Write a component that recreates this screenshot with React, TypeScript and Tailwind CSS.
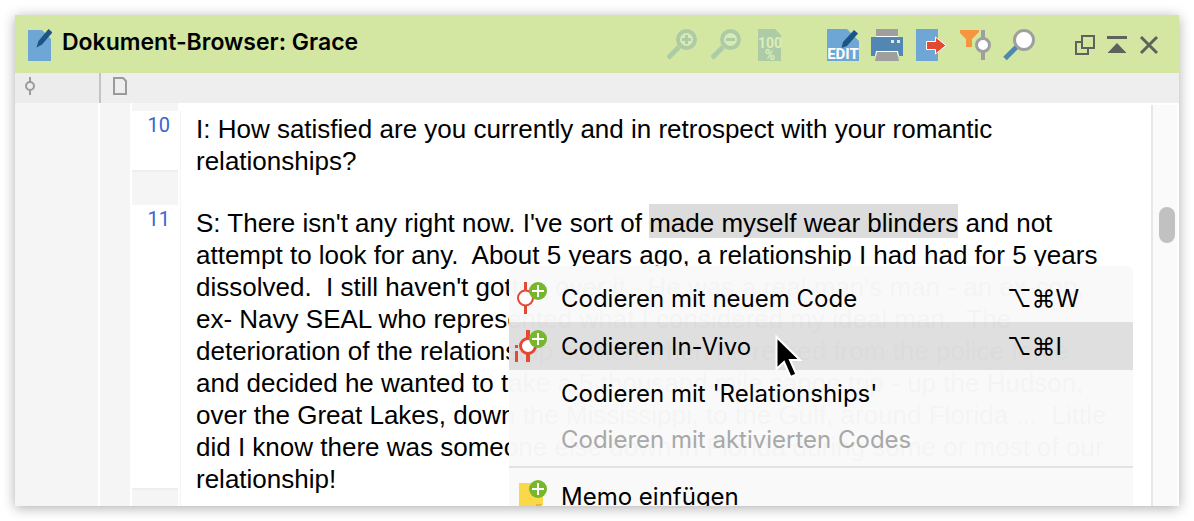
import type { ReactNode } from 'react'

type Paragraph = {
  number: number
  content: ReactNode
}

type MenuItem = {
  label: string
  shortcut?: string
  icon?: ReactNode
  active?: boolean
  disabled?: boolean
}

/* Toolbar icons, all drawn on a 32px grid */

function DocumentIcon() {
  return (
    <svg width="24" height="32" viewBox="0 0 24 32" aria-hidden="true">
      <path d="M0 1H14L23 10V32H0Z" fill="#6ea6d5" />
      <path d="M8.500 18.500L10.500 12L20.500 0L24.500 3.500L14 15.500Z" fill="#1b5585" />
    </svg>
  )
}

function ZoomIcon({ plus }: { plus?: boolean }) {
  return (
    <svg width="32" height="32" viewBox="0 0 32 32" aria-hidden="true">
      <path d="M1 29L12 18" stroke="#adcca6" strokeWidth="5" />
      <circle cx="19.500" cy="10.500" r="8.500" fill="#d9eab5" stroke="#adcca6" strokeWidth="4" />
      <path d={plus ? 'M15 10.5H24M19.5 6V15' : 'M15 10.5H24'} stroke="#adcca6" strokeWidth="3" />
    </svg>
  )
}

function HundredPercentIcon() {
  return (
    <svg width="32" height="32" viewBox="0 0 32 32" aria-hidden="true">
      <path d="M3 0H20L26 6V32H3Z" fill="#adcca6" />
      <g
        fill="#dcedb6"
        fontFamily="'Liberation Sans Narrow', Roboto, sans-serif"
        fontWeight="700"
        textAnchor="middle"
      >
        <text x="15" y="19" fontSize="14">100</text>
        <text x="15" y="31" fontSize="14">%</text>
      </g>
    </svg>
  )
}

function EditIcon() {
  return (
    <svg width="32" height="32" viewBox="0 0 32 32" aria-hidden="true">
      <path d="M0 0H20L32 12V32H0Z" fill="#6ea6d5" />
      <path d="M14.500 19L16 13L27 1L31 4.500L20 17Z" fill="#1b5585" />
      <text
        x="16"
        y="30"
        fill="#fff"
        fontFamily="'Liberation Sans Narrow', Roboto, sans-serif"
        fontSize="15"
        fontWeight="700"
        textAnchor="middle"
      >
        EDIT
      </text>
    </svg>
  )
}

function PrinterIcon() {
  return (
    <svg width="32" height="32" viewBox="0 0 32 32" aria-hidden="true">
      <path d="M5 0H27V7H5Z" fill="#9f9f9f" />
      <path d="M0 8H32V27H0Z" fill="#5187b2" />
      <path d="M5 7H27V8H5Z" fill="#fff" />
      <path d="M20 11H23V14H20ZM26 11H29V14H26Z" fill="#e8e8e8" />
      <path d="M5 22H27L28 27H4Z" fill="#fff" />
      <path d="M6 23H26L28 32H4Z" fill="#9f9f9f" />
    </svg>
  )
}

function ExportIcon() {
  return (
    <svg width="32" height="32" viewBox="0 0 32 32" aria-hidden="true">
      <path d="M1 0H23V32H1Z" fill="#6ea6d5" />
      <path
        d="M11.500 12.500H20.500V8L31 16.500L20.500 25V20.500H11.500Z"
        fill="#e24a33"
        stroke="#fff"
        strokeWidth="1"
      />
    </svg>
  )
}

function FilterCodeIcon() {
  return (
    <svg width="32" height="32" viewBox="0 0 32 32" aria-hidden="true">
      <path d="M1 1H20V3L13 10V18H7V10L1 4Z" fill="#f7953f" />
      <path d="M24 1V31" stroke="#9f9f9f" strokeWidth="4" />
      <circle cx="24" cy="16" r="6.500" fill="#fff" stroke="#9f9f9f" strokeWidth="3" />
    </svg>
  )
}

function SearchIcon() {
  return (
    <svg width="32" height="32" viewBox="0 0 32 32" aria-hidden="true">
      <path d="M2 29.500L14 17.500" stroke="#4f87b3" strokeWidth="5" />
      <circle cx="21" cy="11" r="9.500" fill="#fff" stroke="#9f9f9f" strokeWidth="3" />
    </svg>
  )
}

/* Window controls */

function UndockIcon() {
  return (
    <svg width="20" height="20" viewBox="0 0 20 20" aria-hidden="true">
      <path d="M7 7H1V19H13V13" fill="none" stroke="#5f625c" strokeWidth="2" />
      <path d="M7 1H19V13H7Z" fill="none" stroke="#5f625c" strokeWidth="2" />
    </svg>
  )
}

function CollapseIcon() {
  return (
    <svg width="20" height="20" viewBox="0 0 20 20" aria-hidden="true">
      <path d="M0 1H20V4H0ZM10 8L19.500 18H0.500Z" fill="#5f625c" />
    </svg>
  )
}

function CloseIcon() {
  return (
    <svg width="20" height="20" viewBox="0 0 20 20" aria-hidden="true">
      <path d="M2 2L18 18M18 2L2 18" stroke="#5f625c" strokeWidth="3" />
    </svg>
  )
}

/* Context menu icons */

function PlusBadge() {
  return (
    <>
      <circle cx="29" cy="10" r="9" fill="#76b72e" />
      <path d="M23 10H35M29 4V16" stroke="#fff" strokeWidth="2" />
    </>
  )
}

function NewCodeIcon() {
  return (
    <svg width="38" height="34" viewBox="0 0 38 34" aria-hidden="true">
      <path d="M16.500 1V33" stroke="#e24a33" strokeWidth="3" />
      <circle cx="16.500" cy="17" r="7.500" fill="#fff" stroke="#e24a33" strokeWidth="2" />
      <PlusBadge />
    </svg>
  )
}

function InVivoIcon() {
  return (
    <svg width="38" height="34" viewBox="0 0 38 34" aria-hidden="true">
      <path d="M19 1V33" stroke="#e24a33" strokeWidth="4" />
      <circle cx="19" cy="17" r="7.500" fill="#fff" stroke="#e24a33" strokeWidth="3" />
      <path d="M6 16H9V19H6ZM6 22H9V33H6Z" fill="#e24a33" />
      <PlusBadge />
    </svg>
  )
}

function MemoIcon() {
  return (
    <svg width="38" height="34" viewBox="0 0 38 34" aria-hidden="true">
      <path d="M10 4H34V25L27 32H10Z" fill="#f9d84a" />
      <path d="M34 25H27V32Z" fill="#e5b93a" />
      <PlusBadge />
    </svg>
  )
}

const zoomTools = [
  { label: 'Vergrößern', icon: <ZoomIcon plus /> },
  { label: 'Verkleinern', icon: <ZoomIcon /> },
  { label: 'Originalgröße', icon: <HundredPercentIcon /> },
]

const documentTools = [
  { label: 'Bearbeiten', icon: <EditIcon /> },
  { label: 'Drucken', icon: <PrinterIcon /> },
  { label: 'Exportieren', icon: <ExportIcon /> },
  { label: 'Codes filtern', icon: <FilterCodeIcon /> },
  { label: 'Suchen', icon: <SearchIcon /> },
]

const windowTools = [
  { label: 'Abdocken', icon: <UndockIcon /> },
  { label: 'Einklappen', icon: <CollapseIcon /> },
  { label: 'Schließen', icon: <CloseIcon /> },
]

const paragraphs: Paragraph[] = [
  {
    number: 10,
    content:
      'I: How satisfied are you currently and in retrospect with your romantic relationships?',
  },
  {
    number: 11,
    content: (
      <>
        S: There isn't any right now. I've sort of{' '}
        <mark className="bg-[#dcdcdc] pt-1 text-black">made myself wear blinders</mark>
        {' and not attempt to look for any.  About 5 years ago, a relationship I had had for 5 years dissolved.  '}
        {"I still haven't gotten over it.  He was a real man's man - an ex-cop, ex- Navy SEAL who represented "}
        {'what I considered my ideal man.  The deterioration of the relationship started when he retired from '}
        {'the police force and decided he wanted to take a 5 thousand mile canoe trip - up the Hudson, over the '}
        {'Great Lakes, down the Mississippi, to the Gulf, around Florida ...  Little did I know there was '}
        {'someone else down in Florida during some or most of our relationship!'}
      </>
    ),
  },
]

const codingItems: MenuItem[] = [
  { label: 'Codieren mit neuem Code', shortcut: '⌥⌘W', icon: <NewCodeIcon /> },
  { label: 'Codieren In-Vivo', shortcut: '⌥⌘I', icon: <InVivoIcon />, active: true },
  { label: "Codieren mit 'Relationships'" },
  { label: 'Codieren mit aktivierten Codes', disabled: true },
]

const memoItems: MenuItem[] = [{ label: 'Memo einfügen', icon: <MemoIcon /> }]

function ToolGroup({ tools }: { tools: { label: string; icon: ReactNode }[] }) {
  return (
    <div className="flex items-center gap-3">
      {tools.map((tool) => (
        <button key={tool.label} type="button" aria-label={tool.label}>
          {tool.icon}
        </button>
      ))}
    </div>
  )
}

function MenuRow({ item }: { item: MenuItem }) {
  return (
    <button
      type="button"
      role="menuitem"
      disabled={item.disabled}
      className={`flex w-full items-center text-left ${item.icon ? 'h-12' : 'h-[46px]'} ${
        item.active ? 'bg-black/10' : ''
      } ${item.disabled ? 'text-[#a8a8a8]' : 'text-black'}`}
    >
      <span className="w-[52px] shrink-0">{item.icon}</span>
      <span className="flex-1 pt-0.5">{item.label}</span>
      {item.shortcut && <span className="w-[126px] shrink-0 pt-0.5">{item.shortcut}</span>}
    </button>
  )
}

function ContextMenu() {
  return (
    <div
      role="menu"
      className="absolute top-[163px] left-[494px] w-[624px] rounded-md bg-[#f9f9f9]/98 pt-2 font-[Inter,'DejaVu_Sans',sans-serif] text-2xl"
    >
      {codingItems.map((item) => (
        <MenuRow key={item.label} item={item} />
      ))}
      <hr className="my-1 border-t-2 border-[#e2e2e2]" />
      {memoItems.map((item) => (
        <MenuRow key={item.label} item={item} />
      ))}
    </div>
  )
}

function MouseCursor() {
  return (
    <svg
      className="absolute top-[231px] left-[760px]"
      width="28"
      height="46"
      viewBox="0 0 28 46"
      aria-hidden="true"
    >
      <path
        d="M1.500 3V35L9 28L15.500 43L21.500 40.500L15 26H25Z"
        fill="#000"
        stroke="#fff"
        strokeWidth="2"
      />
    </svg>
  )
}

export default function App() {
  return (
    <div className="h-screen bg-white p-[15px]">
      <main className="flex h-full flex-col overflow-hidden bg-white shadow-[0_2px_12px_rgba(0,0,0,0.32)]">
        <header className="flex h-[58px] shrink-0 items-center gap-10 bg-[#d3e7a2] pt-0.5 pr-5 pl-[13px]">
          <div className="flex flex-1 items-center gap-2.5">
            <DocumentIcon />
            <h1 className="pb-1.5 font-[Inter,sans-serif] text-[23px] font-semibold text-black">
              Dokument-Browser: Grace
            </h1>
          </div>
          <ToolGroup tools={zoomTools} />
          <ToolGroup tools={documentTools} />
          <ToolGroup tools={windowTools} />
        </header>

        {/* Column headers */}
        <div className="flex h-[30px] shrink-0 bg-[#eeeeee]">
          <div className="w-[86px] border-r-2 border-[#c4c4c4] bg-[#ececec] pt-1 pl-[9px]">
            <svg width="12" height="18" viewBox="0 0 12 18" aria-hidden="true">
              <path d="M6 0V5M6 13V18" stroke="#9b9b9b" strokeWidth="2" />
              <circle cx="6" cy="9" r="4" fill="none" stroke="#9b9b9b" strokeWidth="2" />
            </svg>
          </div>
          <div className="pt-1 pl-3">
            <svg width="14" height="18" viewBox="0 0 14 18" aria-hidden="true">
              <path d="M1 1H10L13 4V17H1Z" fill="none" stroke="#9b9b9b" strokeWidth="2" />
            </svg>
          </div>
        </div>

        <div className="relative flex min-h-0 flex-1 overflow-hidden">
          <div className="w-[85px] shrink-0 border-r-2 border-white bg-[#f5f5f5]" />
          <div className="w-8 shrink-0 border-r-2 border-white bg-[#f5f5f5]" />

          <div className="flex-1">
            <div className="flex h-2">
              <div className="w-[46px] bg-[#f5f5f5]" />
            </div>
            {paragraphs.map((paragraph) => (
              <div key={paragraph.number} className="flex">
                <div className="flex w-[46px] shrink-0 flex-col bg-[#f5f5f5]">
                  <div className="mb-[33px] flex-1 border-b-2 border-[#eeeeee] bg-white pt-0.5 pr-2 text-right font-[Roboto,sans-serif] text-xl leading-6 text-[#3a66cf]">
                    {paragraph.number}
                  </div>
                </div>
                <div className="ml-0.5 w-px shrink-0 bg-[#f5f5f5]" />
                <p className="pt-0.5 pr-10 pb-7 pl-[15px] font-['Liberation_Sans',Arial,sans-serif] text-[26px] leading-8 whitespace-pre-wrap text-black">
                  {paragraph.content}
                </p>
              </div>
            ))}
          </div>

          {/* Scrollbar */}
          <div className="mt-0.5 mr-0.5 w-[26px] shrink-0 border-l-2 border-[#e7e7e7] bg-[#fafafa] pt-[102px] pl-1.5">
            <div className="h-9 w-4 rounded-full bg-[#c1c1c1]" />
          </div>

          <ContextMenu />
          <MouseCursor />
        </div>
      </main>
    </div>
  )
}
